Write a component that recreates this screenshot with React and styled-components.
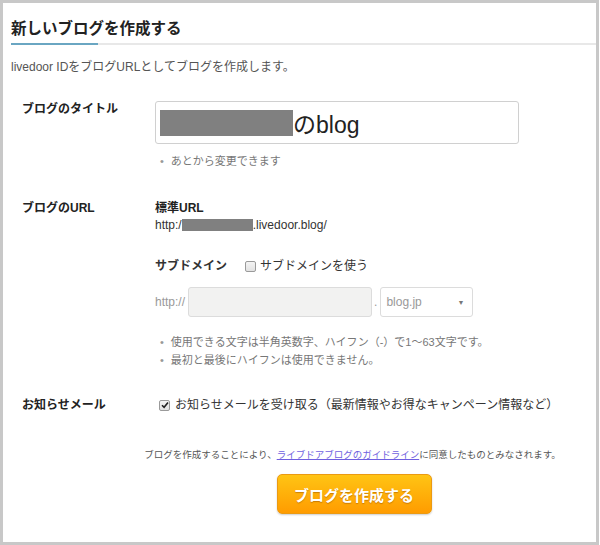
import React from "react";
import styled, { createGlobalStyle } from "styled-components";

const GlobalStyle = createGlobalStyle`
  html, body {
    margin: 0;
    padding: 0;
    background: #fff;
  }
  body {
    font-family: "Liberation Sans", "Noto Sans CJK JP", sans-serif;
    color: #333;
  }
`;

const Frame = styled.div`
  box-sizing: border-box;
  width: 599px;
  height: 545px;
  border: 3px solid #c8c8c8;
  background: #fff;
  overflow: hidden;
`;

const Header = styled.div`
  margin-left: 8px;
  padding-top: 15px;
`;

const Title = styled.h2`
  margin: 0;
  font-size: 15.5px;
  line-height: 22px;
  font-weight: bold;
  color: #222;
  white-space: nowrap;
`;

const Rule = styled.div`
  display: flex;
  margin-top: 3px;
  height: 2px;
  background: #e8e8e8;
`;

const RuleAccent = styled.span`
  width: 87px;
  height: 2px;
  background: #6aa6c2;
`;

const Lead = styled.p`
  margin: 13px 0 0 8px;
  font-size: 12px;
  line-height: 18px;
  color: #555;
`;

const Row = styled.div`
  display: grid;
  grid-template-columns: 133px 1fr;
  padding-left: 19px;
  margin-top: ${(p) => p.$gap}px;
`;

const Label = styled.div`
  font-size: 12px;
  line-height: 18px;
  font-weight: bold;
  color: #222;
`;

const Field = styled.div`
  display: flex;
  flex-direction: column;
  align-items: flex-start;
`;

const TitleInput = styled.div`
  box-sizing: border-box;
  display: flex;
  align-items: center;
  width: 364px;
  height: 43px;
  margin-top: 1px;
  padding-left: 4px;
  border: 1px solid #d0d0d0;
  border-radius: 3px;
  font-size: 23px;
  color: #222;
`;

const Masked = styled.span`
  display: inline-block;
  width: ${(p) => p.$w}px;
  height: ${(p) => p.$h}px;
  background: #808080;
`;

const Hints = styled.ul`
  list-style: none;
  margin: ${(p) => p.$top}px 0 0 5px;
  padding: 0;
`;

const Hint = styled.li`
  display: flex;
  gap: 7px;
  font-size: 11px;
  line-height: 18px;
  color: #777;
  &::before {
    content: "•";
    color: #999;
  }
`;

const SubHead = styled.div`
  font-size: 12px;
  line-height: 18px;
  font-weight: bold;
  color: #222;
`;

const UrlLine = styled.div`
  display: flex;
  align-items: center;
  font-size: 12px;
  line-height: 16px;
  color: #333;
`;

const CheckLine = styled.label`
  display: flex;
  align-items: center;
  margin-top: ${(p) => p.$top || 0}px;
  font-size: 12px;
  line-height: 18px;
  color: #333;
`;

const Box = styled.span`
  box-sizing: border-box;
  display: inline-flex;
  align-items: center;
  justify-content: center;
  width: 11px;
  height: 11px;
  margin: 0 ${(p) => p.$right}px 0 ${(p) => p.$left}px;
  border: 1px solid #9a9a9a;
  border-radius: 2px;
  background: linear-gradient(#f4f4f4, #e2e2e2);
`;

const SubRow = styled.div`
  display: flex;
  align-items: center;
  margin-top: 12px;
  font-size: 12px;
  color: #999;
`;

const SubInput = styled.div`
  box-sizing: border-box;
  width: 184px;
  height: 30px;
  margin-left: 3px;
  border: 1px solid #dcdcdc;
  border-radius: 3px;
  background: #f2f2f1;
`;

const Dot = styled.span`
  margin: 0 3px 0 2px;
`;

const Select = styled.div`
  box-sizing: border-box;
  display: flex;
  align-items: center;
  justify-content: space-between;
  width: 93px;
  height: 30px;
  padding: 0 8px 0 5px;
  border: 1px solid #dcdcdc;
  border-radius: 3px;
  background: #fff;
  color: #999;
  font-size: 12px;
`;

const Caret = styled.span`
  font-size: 7px;
  color: #777;
`;

const Footer = styled.div`
  display: flex;
  flex-direction: column;
  align-items: center;
  margin-top: 33px;
  padding-left: 106px;
`;

const Notice = styled.p`
  margin: 0;
  font-size: 9.5px;
  line-height: 16px;
  color: #555;
  white-space: nowrap;
`;

const GuideLink = styled.a`
  color: #6f5fe0;
  text-decoration: underline;
`;

const CreateButton = styled.button`
  box-sizing: border-box;
  width: 155px;
  height: 40px;
  margin-top: 11px;
  margin-left: 3px;
  border: 1px solid #eb9a12;
  border-radius: 5px;
  background: linear-gradient(#ffc414, #ff9c00);
  box-shadow: 0 1px 2px rgba(0, 0, 0, 0.2);
  color: #fff;
  font-family: "Liberation Sans", "Noto Sans CJK JP", sans-serif;
  font-size: 15px;
  font-weight: bold;
  text-shadow: 0 1px 1px rgba(150, 80, 0, 0.5);
  cursor: pointer;
`;

const Check = () => (
  <svg width="8" height="8" viewBox="0 0 8 8">
    <path d="M1 4.2 L3.1 6.3 L7 1.4" fill="none" stroke="#222" strokeWidth="1.6" />
  </svg>
);

const App = () => {
  return (
    <>
      <GlobalStyle />
      <Frame>
        <Header>
          <Title>新しいブログを作成する</Title>
          <Rule>
            <RuleAccent />
          </Rule>
        </Header>
        <Lead>livedoor IDをブログURLとしてブログを作成します。</Lead>

        <Row $gap={24}>
          <Label>ブログのタイトル</Label>
          <Field>
            <TitleInput>
              <Masked $w={133} $h={26} />
              のblog
            </TitleInput>
            <Hints $top={8}>
              <Hint>あとから変更できます</Hint>
            </Hints>
          </Field>
        </Row>

        <Row $gap={29}>
          <Label>ブログのURL</Label>
          <Field>
            <SubHead>標準URL</SubHead>
            <UrlLine>
              http:/
              <Masked $w={71} $h={12} />
              .livedoor.blog/
            </UrlLine>
            <CheckLine $top={24}>
              <b>サブドメイン</b>
              <Box $left={18} $right={4} />
              サブドメインを使う
            </CheckLine>
            <SubRow>
              http://
              <SubInput />
              <Dot>.</Dot>
              <Select>
                blog.jp
                <Caret>▼</Caret>
              </Select>
            </SubRow>
            <Hints $top={16}>
              <Hint>使用できる文字は半角英数字、ハイフン（-）で1～63文字です。</Hint>
              <Hint>最初と最後にハイフンは使用できません。</Hint>
            </Hints>
          </Field>
        </Row>

        <Row $gap={27}>
          <Label>お知らせメール</Label>
          <CheckLine>
            <Box $left={4} $right={5}>
              <Check />
            </Box>
            お知らせメールを受け取る（最新情報やお得なキャンペーン情報など）
          </CheckLine>
        </Row>

        <Footer>
          <Notice>
            ブログを作成することにより、
            <GuideLink href="#">ライブドアブログのガイドライン</GuideLink>
            に同意したものとみなされます。
          </Notice>
          <CreateButton>ブログを作成する</CreateButton>
        </Footer>
      </Frame>
    </>
  );
};

export default App;
